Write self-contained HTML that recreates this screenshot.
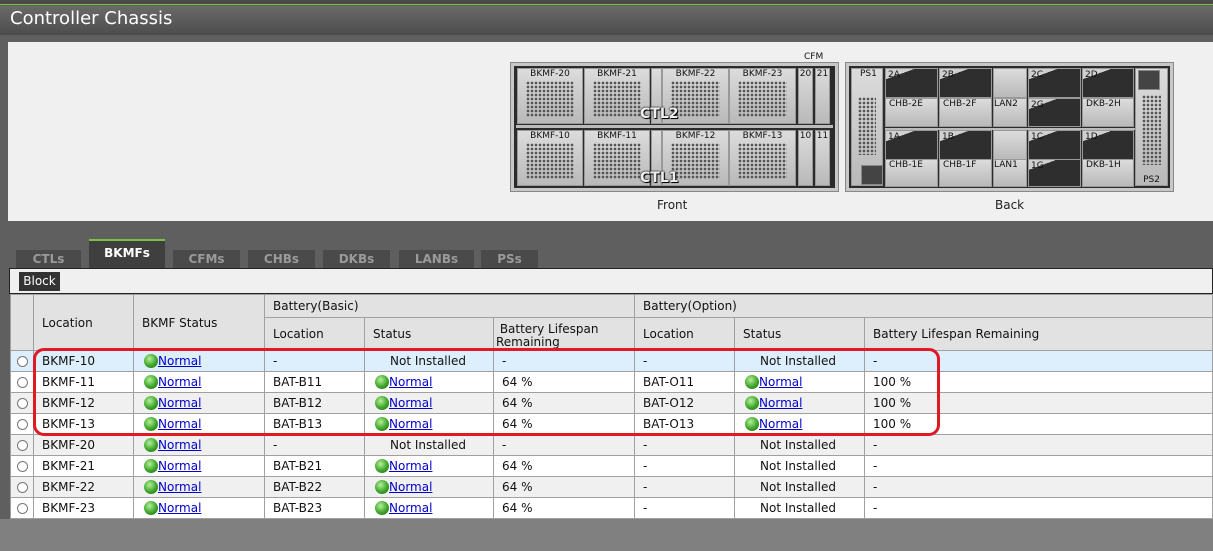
<!DOCTYPE html>
<html><head><meta charset="utf-8"><style>
*{margin:0;padding:0;box-sizing:border-box}
body{width:1213px;height:551px;overflow:hidden;background:#5f5f5f;font-family:"DejaVu Sans","Liberation Sans",sans-serif;font-size:12px;color:#111;position:relative}
.a{position:absolute}
#top{left:0;top:0;width:1213px;height:5px;background:#4a4a4a;border-bottom:1px solid #7ac142}
#title{left:0;top:6px;width:1213px;height:29px;background:linear-gradient(#6a6a6a,#4c4c4c);color:#fff;font-size:18px;padding:2px 10px}
#panel{left:8px;top:42px;width:1205px;height:179px;background:#f0f0f0}
.box{background:#c8c8c8;border:1px solid #888}
.in{background:#2b2b2b}
.slot{background:linear-gradient(#dcdcdc,#b9b9b9);border:1px solid #999;font-size:9px;text-align:center;color:#111}
.mesh{position:absolute;left:8px;right:8px;top:12px;bottom:6px;background-image:radial-gradient(#555 1.2px,transparent 1.5px);background-size:4px 4px}
.dk{background:linear-gradient(160deg,#d0d0d0 0 22%,#2e2e2e 22%);border:1px solid #999;font-size:9px;color:#111;padding:1px 2px}
.cap{font-size:12px;color:#222}
#tabs{left:16px;top:239px}
.tab{position:absolute;top:11px;height:18px;background:#4a4a4a;color:#9a9a9a;font-size:12px;text-align:center;padding-top:2px;font-weight:bold}
.tab.on{top:0;height:29px;background:#3f3f3f;color:#fff;border-top:2px solid #7ac142;padding-top:5px}
#tool{left:9px;top:268px;width:1204px;height:26px;background:#f0f0f0;border:1px solid #222}
#blk{left:9px;top:3px;width:41px;height:19px;background:#333;color:#fff;font-size:12px;text-align:center;padding-top:2px}
table{position:absolute;left:10px;top:294px;border-collapse:collapse;width:1203px;table-layout:fixed}
td,th{border:1px solid #a0a0a0;font-weight:normal;text-align:left;padding:0 8px;height:21px;white-space:nowrap;overflow:hidden;font-size:12px}
th{background:#e2e2e2;vertical-align:middle}
tr.h1 th{height:23px}tr.h2 th{height:33px}
td.r{padding:0;text-align:center}
.rad{display:inline-block;width:11px;height:11px;border-radius:50%;border:1px solid #777;background:#fff;vertical-align:middle}
.b{background:#ddeefc}.g{background:#f0f0f0}.w{background:#fff}
.ok{display:inline-block;width:14px;height:14px;border-radius:50%;background:radial-gradient(circle at 40% 35%,#b6f09a,#3ea52a 55%,#1d6a16);vertical-align:-3px;margin-left:2px}
a{color:#00c;text-decoration:underline}
.ni{padding-left:25px}
#red{left:33px;top:348px;width:907px;height:88px;border:3px solid #e01a24;border-radius:11px}
.ctl{font-size:14px;font-weight:bold;color:#eee;text-shadow:0 0 1px #000,0 0 2px #000,1px 1px 0 #000}
</style></head><body>
<div id="top" class="a"></div>
<div id="title" class="a">Controller Chassis</div>
<div id="panel" class="a"></div>

<div class="a" style="left:804px;top:52px;font-size:9px">CFM</div>
<div class="a box" style="left:510px;top:62px;width:329px;height:130px"></div>
<div class="a in" style="left:514px;top:66px;width:321px;height:122px"></div>
<div class="a" style="left:516px;top:125px;width:317px;height:3px;background:#bbb"></div>
<div class="a slot" style="left:517px;top:68px;width:66px;height:56px">BKMF-20<div class="mesh"></div></div>
<div class="a slot" style="left:584px;top:68px;width:66px;height:56px">BKMF-21<div class="mesh"></div></div>
<div class="a slot" style="left:651px;top:68px;width:11px;height:56px"></div>
<div class="a slot" style="left:662px;top:68px;width:67px;height:56px">BKMF-22<div class="mesh"></div></div>
<div class="a slot" style="left:729px;top:68px;width:67px;height:56px">BKMF-23<div class="mesh"></div></div>
<div class="a slot" style="left:798px;top:68px;width:15px;height:56px">20</div>
<div class="a slot" style="left:815px;top:68px;width:15px;height:56px">21</div>
<div class="a ctl" style="left:640px;top:106px">CTL2</div>
<div class="a slot" style="left:517px;top:130px;width:66px;height:56px">BKMF-10<div class="mesh"></div></div>
<div class="a slot" style="left:584px;top:130px;width:66px;height:56px">BKMF-11<div class="mesh"></div></div>
<div class="a slot" style="left:651px;top:130px;width:11px;height:56px"></div>
<div class="a slot" style="left:662px;top:130px;width:67px;height:56px">BKMF-12<div class="mesh"></div></div>
<div class="a slot" style="left:729px;top:130px;width:67px;height:56px">BKMF-13<div class="mesh"></div></div>
<div class="a slot" style="left:798px;top:130px;width:15px;height:56px">10</div>
<div class="a slot" style="left:815px;top:130px;width:15px;height:56px">11</div>
<div class="a ctl" style="left:640px;top:170px">CTL1</div>
<div class="a cap" style="left:657px;top:198px">Front</div>

<div class="a box" style="left:845px;top:62px;width:329px;height:130px"></div>
<div class="a in" style="left:849px;top:66px;width:321px;height:122px"></div>
<div class="a slot" style="left:851px;top:68px;width:32px;height:118px;text-align:left;padding-left:8px">PS1<div class="mesh" style="top:28px;bottom:30px;left:6px;right:6px"></div></div>
<div class="a slot" style="left:1135px;top:68px;width:33px;height:118px;padding-top:106px;font-size:9px">PS2<div class="mesh" style="top:26px;bottom:20px;left:6px;right:6px"></div></div>
<div class="a" style="left:861px;top:165px;width:22px;height:20px;background:#444;border:1px solid #888"></div>
<div class="a" style="left:1138px;top:70px;width:22px;height:20px;background:#444;border:1px solid #888"></div>
<div class="a dk" style="left:885px;top:68px;width:53px;height:30px">2A</div>
<div class="a dk" style="left:939px;top:68px;width:53px;height:30px">2B</div>
<div class="a slot" style="left:993px;top:68px;width:34px;height:30px"></div>
<div class="a dk" style="left:1028px;top:68px;width:53px;height:30px">2C</div>
<div class="a dk" style="left:1082px;top:68px;width:52px;height:30px">2D</div>
<div class="a slot" style="left:885px;top:98px;width:53px;height:29px;text-align:left;padding-left:3px">CHB-2E</div>
<div class="a slot" style="left:939px;top:98px;width:53px;height:29px;text-align:left;padding-left:3px">CHB-2F</div>
<div class="a slot" style="left:993px;top:98px;width:34px;height:29px;text-align:left">LAN2</div>
<div class="a dk" style="left:1028px;top:98px;width:53px;height:29px">2G</div>
<div class="a slot" style="left:1082px;top:98px;width:52px;height:29px;text-align:left;padding-left:3px">DKB-2H</div>
<div class="a" style="left:885px;top:128px;width:250px;height:2px;background:#bbb"></div>
<div class="a dk" style="left:885px;top:130px;width:53px;height:30px">1A</div>
<div class="a dk" style="left:939px;top:130px;width:53px;height:30px">1B</div>
<div class="a slot" style="left:993px;top:130px;width:34px;height:30px"></div>
<div class="a dk" style="left:1028px;top:130px;width:53px;height:30px">1C</div>
<div class="a dk" style="left:1082px;top:130px;width:52px;height:30px">1D</div>
<div class="a slot" style="left:885px;top:159px;width:53px;height:28px;text-align:left;padding-left:3px">CHB-1E</div>
<div class="a slot" style="left:939px;top:159px;width:53px;height:28px;text-align:left;padding-left:3px">CHB-1F</div>
<div class="a slot" style="left:993px;top:159px;width:34px;height:28px;text-align:left">LAN1</div>
<div class="a dk" style="left:1028px;top:159px;width:53px;height:28px">1G</div>
<div class="a slot" style="left:1082px;top:159px;width:52px;height:28px;text-align:left;padding-left:3px">DKB-1H</div>
<div class="a cap" style="left:995px;top:198px">Back</div>

<div id="tabs" class="a">
<div class="tab" style="left:0;width:65px">CTLs</div>
<div class="tab on" style="left:73px;width:76px">BKMFs</div>
<div class="tab" style="left:157px;width:67px">CFMs</div>
<div class="tab" style="left:232px;width:67px">CHBs</div>
<div class="tab" style="left:307px;width:67px">DKBs</div>
<div class="tab" style="left:383px;width:75px">LANBs</div>
<div class="tab" style="left:465px;width:57px">PSs</div>
</div>
<div id="tool" class="a"><div id="blk" class="a">Block</div></div>

<table>
<colgroup><col style="width:23px"><col style="width:100px"><col style="width:131px"><col style="width:100px"><col style="width:129px"><col style="width:141px"><col style="width:100px"><col style="width:130px"><col></colgroup>
<tr class="h1"><th rowspan="2"></th><th rowspan="2">Location</th><th rowspan="2">BKMF Status</th><th colspan="3">Battery(Basic)</th><th colspan="3">Battery(Option)</th></tr>
<tr class="h2"><th>Location</th><th>Status</th><th style="line-height:13px;padding-left:2px;padding-top:3px">&nbsp;Battery Lifespan<br>Remaining</th><th>Location</th><th>Status</th><th>Battery Lifespan Remaining</th></tr>
<tr class="b"><td class="r"><span class="rad"></span></td><td>BKMF-10</td><td><span class="ok"></span><a>Normal</a></td><td>-</td><td class="ni">Not Installed</td><td>-</td><td>-</td><td class="ni">Not Installed</td><td>-</td></tr>
<tr class="w"><td class="r"><span class="rad"></span></td><td>BKMF-11</td><td><span class="ok"></span><a>Normal</a></td><td>BAT-B11</td><td><span class="ok"></span><a>Normal</a></td><td>64 %</td><td>BAT-O11</td><td><span class="ok"></span><a>Normal</a></td><td>100 %</td></tr>
<tr class="g"><td class="r"><span class="rad"></span></td><td>BKMF-12</td><td><span class="ok"></span><a>Normal</a></td><td>BAT-B12</td><td><span class="ok"></span><a>Normal</a></td><td>64 %</td><td>BAT-O12</td><td><span class="ok"></span><a>Normal</a></td><td>100 %</td></tr>
<tr class="w"><td class="r"><span class="rad"></span></td><td>BKMF-13</td><td><span class="ok"></span><a>Normal</a></td><td>BAT-B13</td><td><span class="ok"></span><a>Normal</a></td><td>64 %</td><td>BAT-O13</td><td><span class="ok"></span><a>Normal</a></td><td>100 %</td></tr>
<tr class="g"><td class="r"><span class="rad"></span></td><td>BKMF-20</td><td><span class="ok"></span><a>Normal</a></td><td>-</td><td class="ni">Not Installed</td><td>-</td><td>-</td><td class="ni">Not Installed</td><td>-</td></tr>
<tr class="w"><td class="r"><span class="rad"></span></td><td>BKMF-21</td><td><span class="ok"></span><a>Normal</a></td><td>BAT-B21</td><td><span class="ok"></span><a>Normal</a></td><td>64 %</td><td>-</td><td class="ni">Not Installed</td><td>-</td></tr>
<tr class="g"><td class="r"><span class="rad"></span></td><td>BKMF-22</td><td><span class="ok"></span><a>Normal</a></td><td>BAT-B22</td><td><span class="ok"></span><a>Normal</a></td><td>64 %</td><td>-</td><td class="ni">Not Installed</td><td>-</td></tr>
<tr class="w"><td class="r"><span class="rad"></span></td><td>BKMF-23</td><td><span class="ok"></span><a>Normal</a></td><td>BAT-B23</td><td><span class="ok"></span><a>Normal</a></td><td>64 %</td><td>-</td><td class="ni">Not Installed</td><td>-</td></tr>
</table>
<div class="a" style="left:0;top:519px;width:1213px;height:32px;background:#808080"></div>
<div id="red" class="a"></div>
</body></html>
